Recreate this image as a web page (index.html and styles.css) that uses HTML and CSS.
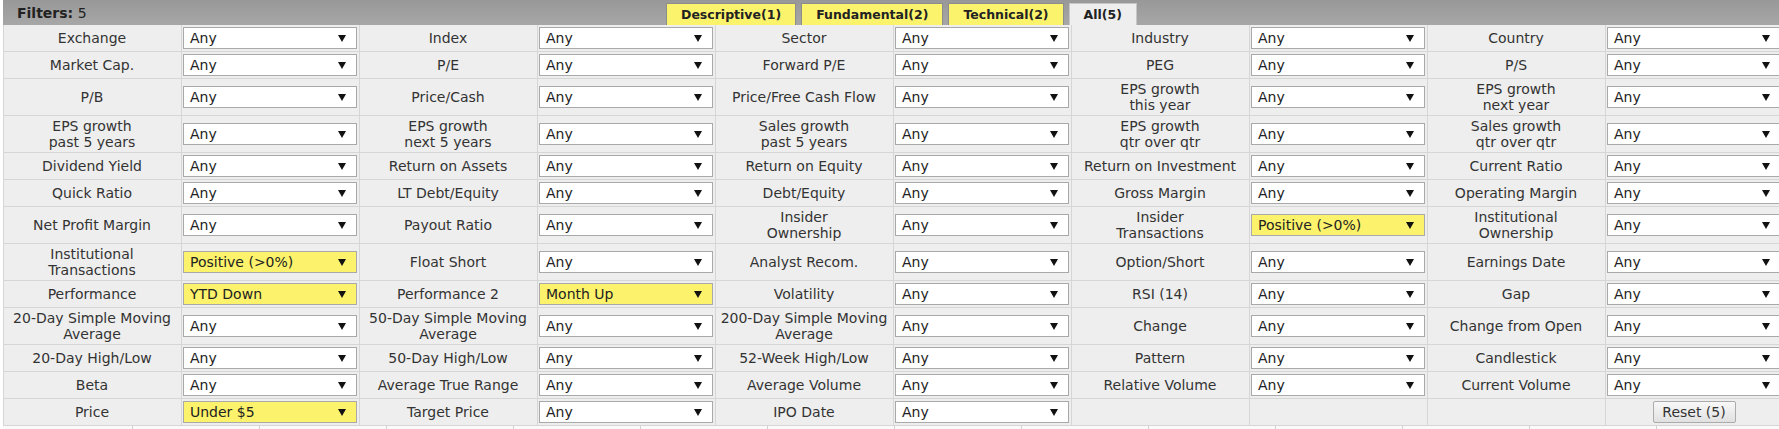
FILE: index.html
```html
<!DOCTYPE html>
<html lang="en">
<head>
    <meta charset="utf-8">
    <title>Screener filters</title>
    <link rel="stylesheet" href="styles.css">
</head>
<body>
<div class="page">
    <div class="filters-head">
        <div class="filters-title"><b>Filters:</b> 5</div>
        <div class="tabs">
            <div class="tab">Descriptive(1)</div>
            <div class="tab">Fundamental(2)</div>
            <div class="tab">Technical(2)</div>
            <div class="tab active">All(5)</div>
        </div>
    </div>

    <table class="filter-table">
        <colgroup>
            <col><col><col><col><col><col><col><col><col><col>
        </colgroup>
        <tr>
            <td class="lbl">Exchange</td><td class="fld"><div class="sel">Any</div></td>
            <td class="lbl">Index</td><td class="fld"><div class="sel">Any</div></td>
            <td class="lbl">Sector</td><td class="fld"><div class="sel">Any</div></td>
            <td class="lbl">Industry</td><td class="fld"><div class="sel">Any</div></td>
            <td class="lbl">Country</td><td class="fld"><div class="sel">Any</div></td>
        </tr>
        <tr>
            <td class="lbl">Market Cap.</td><td class="fld"><div class="sel">Any</div></td>
            <td class="lbl">P/E</td><td class="fld"><div class="sel">Any</div></td>
            <td class="lbl">Forward P/E</td><td class="fld"><div class="sel">Any</div></td>
            <td class="lbl">PEG</td><td class="fld"><div class="sel">Any</div></td>
            <td class="lbl">P/S</td><td class="fld"><div class="sel">Any</div></td>
        </tr>
        <tr>
            <td class="lbl">P/B</td><td class="fld"><div class="sel">Any</div></td>
            <td class="lbl">Price/Cash</td><td class="fld"><div class="sel">Any</div></td>
            <td class="lbl">Price/Free Cash Flow</td><td class="fld"><div class="sel">Any</div></td>
            <td class="lbl">EPS growth<br>this year</td><td class="fld"><div class="sel">Any</div></td>
            <td class="lbl">EPS growth<br>next year</td><td class="fld"><div class="sel">Any</div></td>
        </tr>
        <tr>
            <td class="lbl">EPS growth<br>past 5 years</td><td class="fld"><div class="sel">Any</div></td>
            <td class="lbl">EPS growth<br>next 5 years</td><td class="fld"><div class="sel">Any</div></td>
            <td class="lbl">Sales growth<br>past 5 years</td><td class="fld"><div class="sel">Any</div></td>
            <td class="lbl">EPS growth<br>qtr over qtr</td><td class="fld"><div class="sel">Any</div></td>
            <td class="lbl">Sales growth<br>qtr over qtr</td><td class="fld"><div class="sel">Any</div></td>
        </tr>
        <tr>
            <td class="lbl">Dividend Yield</td><td class="fld"><div class="sel">Any</div></td>
            <td class="lbl">Return on Assets</td><td class="fld"><div class="sel">Any</div></td>
            <td class="lbl">Return on Equity</td><td class="fld"><div class="sel">Any</div></td>
            <td class="lbl">Return on Investment</td><td class="fld"><div class="sel">Any</div></td>
            <td class="lbl">Current Ratio</td><td class="fld"><div class="sel">Any</div></td>
        </tr>
        <tr>
            <td class="lbl">Quick Ratio</td><td class="fld"><div class="sel">Any</div></td>
            <td class="lbl">LT Debt/Equity</td><td class="fld"><div class="sel">Any</div></td>
            <td class="lbl">Debt/Equity</td><td class="fld"><div class="sel">Any</div></td>
            <td class="lbl">Gross Margin</td><td class="fld"><div class="sel">Any</div></td>
            <td class="lbl">Operating Margin</td><td class="fld"><div class="sel">Any</div></td>
        </tr>
        <tr>
            <td class="lbl">Net Profit Margin</td><td class="fld"><div class="sel">Any</div></td>
            <td class="lbl">Payout Ratio</td><td class="fld"><div class="sel">Any</div></td>
            <td class="lbl">Insider<br>Ownership</td><td class="fld"><div class="sel">Any</div></td>
            <td class="lbl">Insider<br>Transactions</td><td class="fld"><div class="sel on">Positive (&gt;0%)</div></td>
            <td class="lbl">Institutional<br>Ownership</td><td class="fld"><div class="sel">Any</div></td>
        </tr>
        <tr>
            <td class="lbl">Institutional<br>Transactions</td><td class="fld"><div class="sel on">Positive (&gt;0%)</div></td>
            <td class="lbl">Float Short</td><td class="fld"><div class="sel">Any</div></td>
            <td class="lbl">Analyst Recom.</td><td class="fld"><div class="sel">Any</div></td>
            <td class="lbl">Option/Short</td><td class="fld"><div class="sel">Any</div></td>
            <td class="lbl">Earnings Date</td><td class="fld"><div class="sel">Any</div></td>
        </tr>
        <tr>
            <td class="lbl">Performance</td><td class="fld"><div class="sel on">YTD Down</div></td>
            <td class="lbl">Performance 2</td><td class="fld"><div class="sel on">Month Up</div></td>
            <td class="lbl">Volatility</td><td class="fld"><div class="sel">Any</div></td>
            <td class="lbl">RSI (14)</td><td class="fld"><div class="sel">Any</div></td>
            <td class="lbl">Gap</td><td class="fld"><div class="sel">Any</div></td>
        </tr>
        <tr>
            <td class="lbl">20-Day Simple Moving<br>Average</td><td class="fld"><div class="sel">Any</div></td>
            <td class="lbl">50-Day Simple Moving<br>Average</td><td class="fld"><div class="sel">Any</div></td>
            <td class="lbl">200-Day Simple Moving<br>Average</td><td class="fld"><div class="sel">Any</div></td>
            <td class="lbl">Change</td><td class="fld"><div class="sel">Any</div></td>
            <td class="lbl">Change from Open</td><td class="fld"><div class="sel">Any</div></td>
        </tr>
        <tr>
            <td class="lbl">20-Day High/Low</td><td class="fld"><div class="sel">Any</div></td>
            <td class="lbl">50-Day High/Low</td><td class="fld"><div class="sel">Any</div></td>
            <td class="lbl">52-Week High/Low</td><td class="fld"><div class="sel">Any</div></td>
            <td class="lbl">Pattern</td><td class="fld"><div class="sel">Any</div></td>
            <td class="lbl">Candlestick</td><td class="fld"><div class="sel">Any</div></td>
        </tr>
        <tr>
            <td class="lbl">Beta</td><td class="fld"><div class="sel">Any</div></td>
            <td class="lbl">Average True Range</td><td class="fld"><div class="sel">Any</div></td>
            <td class="lbl">Average Volume</td><td class="fld"><div class="sel">Any</div></td>
            <td class="lbl">Relative Volume</td><td class="fld"><div class="sel">Any</div></td>
            <td class="lbl">Current Volume</td><td class="fld"><div class="sel">Any</div></td>
        </tr>
        <tr>
            <td class="lbl">Price</td><td class="fld"><div class="sel on">Under $5</div></td>
            <td class="lbl">Target Price</td><td class="fld"><div class="sel">Any</div></td>
            <td class="lbl">IPO Date</td><td class="fld"><div class="sel">Any</div></td>
            <td class="lbl"></td><td class="fld"></td>
            <td class="lbl"></td><td class="fld"><button type="button" class="reset">Reset (5)</button></td>
        </tr>
    </table>

    <div class="strip">
        <div></div><div></div><div></div><div></div><div></div><div></div><div></div>
        <div></div><div></div><div></div><div></div><div></div><div></div><div></div>
    </div>
</div>
</body>
</html>
```

FILE: styles.css
```css
body {
    margin: 0;
    padding: 0 0 0 3px;
    font-family: "DejaVu Sans", Verdana, sans-serif;
    font-size: 14px;
    color: #333;
    background: #fff;
    overflow: hidden;
}

.page {
    width: 1780px;
}

.filters-head {
    display: flex;
    align-items: flex-end;
    height: 25px;
    background: linear-gradient(#989898, #a7a7a7);
}
.filters-title {
    align-self: center;
    width: 663px;
    padding-left: 14px;
    box-sizing: border-box;
    font-size: 14px;
    color: #222;
}
.tabs {
    display: flex;
    gap: 5px;
}
.tab {
    height: 22px;
    line-height: 21px;
    padding: 0 14px;
    box-sizing: border-box;
    border: 1px solid #8c8c8c;
    border-bottom: none;
    background: #fcf36c;
    font-size: 12.5px;
    font-weight: bold;
    color: #222;
}
.tab.active {
    background: #eeeeee;
    border-color: #c6c6c6;
}

.filter-table {
    border-collapse: collapse;
    table-layout: fixed;
    width: 1780px;
    background: #eeeeee;
}
.filter-table col {
    width: 178px;
}
.filter-table td {
    border: 1px solid #d6d6d6;
    padding: 2px 2px 2px 1px;
    vertical-align: middle;
}
.filter-table tr:first-child td {
    border-top: none;
}
.lbl {
    text-align: center;
    line-height: 16px;
    white-space: nowrap;
}

.sel {
    display: flex;
    justify-content: space-between;
    align-items: center;
    height: 22px;
    box-sizing: border-box;
    border: 1px solid #a9a9a9;
    background: #fff;
    padding: 0 10px 0 6px;
    color: #222;
}
.sel.on {
    background: #fcf26b;
}
.sel::after {
    content: "";
    border-left: 4px solid transparent;
    border-right: 4px solid transparent;
    border-top: 7px solid #111;
}

.reset {
    display: block;
    margin: 0 auto;
    width: 83px;
    height: 22px;
    padding: 0;
    font: 14px "DejaVu Sans", Verdana, sans-serif;
    color: #333;
    border: 1px solid #ababab;
    border-radius: 2px;
    background: linear-gradient(#f8f8f8, #e1e1e1);
}

.strip {
    display: grid;
    grid-template-columns: 129px repeat(13, 127px);
    height: 8px;
    background: #fafafa;
}
.strip div {
    border-left: 1px solid #cfcfcf;
}
.strip div:first-child {
    border-left: none;
}
```
